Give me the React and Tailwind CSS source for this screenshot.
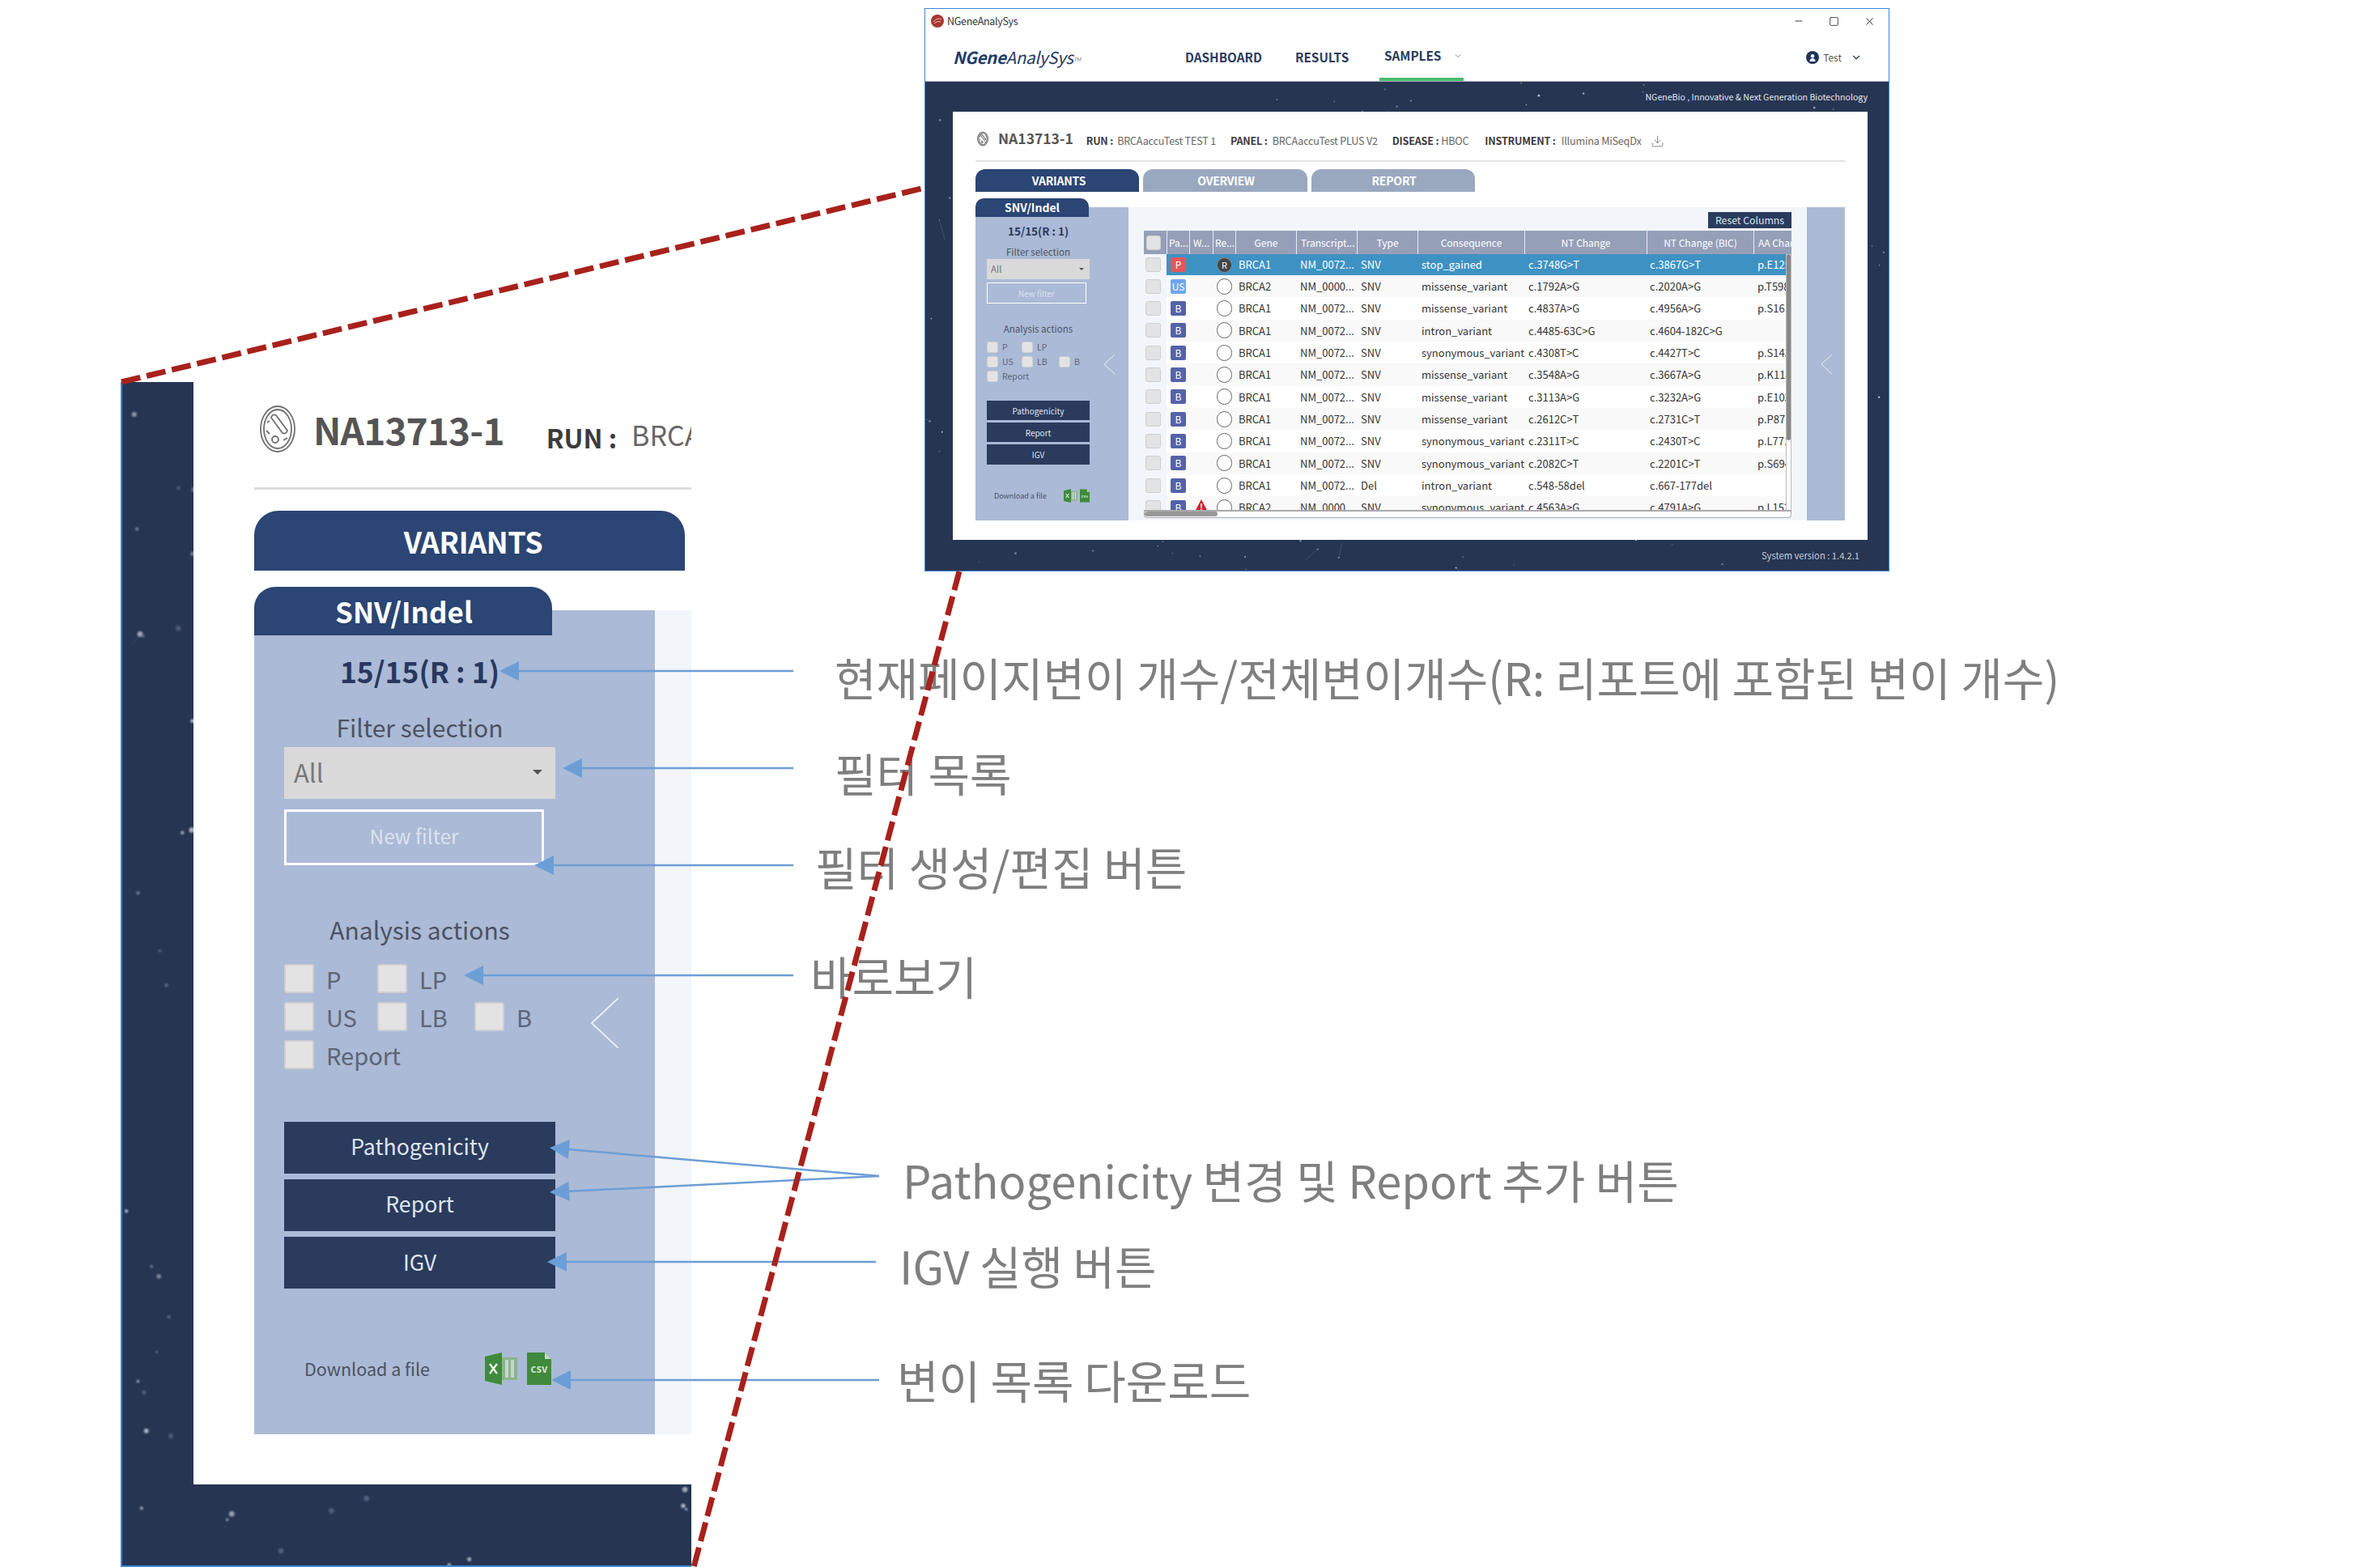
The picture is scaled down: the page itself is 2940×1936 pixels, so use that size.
import React from 'react';
import { ChevronDown, Download, Minus, Square, X } from 'lucide-react';

const rows = [
  { p: 'P', gene: 'BRCA1', nm: 'NM_0072...', type: 'SNV', cons: 'stop_gained', nt: 'c.3748G>T', bic: 'c.3867G>T', aa: 'p.E125', selected: true },
  { p: 'US', gene: 'BRCA2', nm: 'NM_0000...', type: 'SNV', cons: 'missense_variant', nt: 'c.1792A>G', bic: 'c.2020A>G', aa: 'p.T598' },
  { p: 'B', gene: 'BRCA1', nm: 'NM_0072...', type: 'SNV', cons: 'missense_variant', nt: 'c.4837A>G', bic: 'c.4956A>G', aa: 'p.S161' },
  { p: 'B', gene: 'BRCA1', nm: 'NM_0072...', type: 'SNV', cons: 'intron_variant', nt: 'c.4485-63C>G', bic: 'c.4604-182C>G', aa: '' },
  { p: 'B', gene: 'BRCA1', nm: 'NM_0072...', type: 'SNV', cons: 'synonymous_variant', nt: 'c.4308T>C', bic: 'c.4427T>C', aa: 'p.S143' },
  { p: 'B', gene: 'BRCA1', nm: 'NM_0072...', type: 'SNV', cons: 'missense_variant', nt: 'c.3548A>G', bic: 'c.3667A>G', aa: 'p.K118' },
  { p: 'B', gene: 'BRCA1', nm: 'NM_0072...', type: 'SNV', cons: 'missense_variant', nt: 'c.3113A>G', bic: 'c.3232A>G', aa: 'p.E103' },
  { p: 'B', gene: 'BRCA1', nm: 'NM_0072...', type: 'SNV', cons: 'missense_variant', nt: 'c.2612C>T', bic: 'c.2731C>T', aa: 'p.P871' },
  { p: 'B', gene: 'BRCA1', nm: 'NM_0072...', type: 'SNV', cons: 'synonymous_variant', nt: 'c.2311T>C', bic: 'c.2430T>C', aa: 'p.L771' },
  { p: 'B', gene: 'BRCA1', nm: 'NM_0072...', type: 'SNV', cons: 'synonymous_variant', nt: 'c.2082C>T', bic: 'c.2201C>T', aa: 'p.S694' },
  { p: 'B', gene: 'BRCA1', nm: 'NM_0072...', type: 'Del', cons: 'intron_variant', nt: 'c.548-58del', bic: 'c.667-177del', aa: '' },
  { p: 'B', gene: 'BRCA2', nm: 'NM_0000...', type: 'SNV', cons: 'synonymous_variant', nt: 'c.4563A>G', bic: 'c.4791A>G', aa: 'p.L152', warn: true },
];

const headers = [
  { label: 'Pa...', cls: 'pl-[2px]' },
  { label: 'W...', cls: 'pl-[4px]' },
  { label: 'Re...', cls: 'pl-[2px]' },
  { label: 'Gene', cls: 'justify-center' },
  { label: 'Transcript...', cls: 'pl-[5px]' },
  { label: 'Type', cls: 'justify-center' },
  { label: 'Consequence', cls: 'justify-center' },
  { label: 'NT Change', cls: 'justify-center' },
  { label: 'NT Change (BIC)', cls: 'justify-center' },
  { label: 'AA Change', cls: 'pl-[5px]' },
];

const badgeColors = {
  P: 'bg-[#e2575f]',
  US: 'bg-[#6fa6ea]',
  B: 'bg-[#5562a8]',
};

// repeatable dots for the night sky background
function makeStars(count, seed, w, h) {
  let s = seed;
  const next = () => {
    s = (s * 16807) % 2147483647;
    return s / 2147483647;
  };
  return Array.from({ length: count }, () => ({
    x: next() * w,
    y: next() * h,
    o: 0.2 + next() * 0.6,
    k: 0.6 + next() * 0.8,
    dx: (next() - 0.5) * 60,
    dy: (next() - 0.5) * 60,
  }));
}

const Stars = ({ w, h, count, seed, r, className = '' }) => (
  <svg className={`absolute inset-0 ${className}`} width={w} height={h}>
    {makeStars(count, seed, w, h).map((d, i) => (
      <g key={i}>
        <circle cx={d.x} cy={d.y} r={r * d.k} fill="#dfe6f2" opacity={d.o} />
        {i % 9 === 0 && (
          <line x1={d.x} y1={d.y} x2={d.x + d.dx} y2={d.y + d.dy} stroke="#dfe6f2" strokeWidth="1" opacity="0.15" />
        )}
      </g>
    ))}
  </svg>
);

const DishIcon = ({ className, sw }) => (
  <svg className={className} viewBox="0 0 46 60" fill="none" stroke="#707070" strokeWidth={sw}>
    <ellipse cx="23" cy="30" rx="21" ry="28" />
    <ellipse cx="23" cy="30" rx="17" ry="24" />
    <path d="M15 16 L29 35 Q33 37 35 32 L21 13 Q16 11 15 16 Z" />
    <circle cx="20" cy="43" r="4" />
    <path d="M9 32 L13 36 M30 44 L35 41 M10 22 L13 20" />
  </svg>
);

const ExcelIcon = ({ className }) => (
  <svg className={className} viewBox="0 0 40 40">
    <path d="M0 5 L21 0 V40 L0 35 Z" fill="#3f8a3c" />
    <path d="M21 6 H40 V34 H21 Z" fill="#8db48c" />
    <path d="M25 9 H29 V31 H25 Z M32 9 H36 V31 H32 Z" fill="#c5d6cf" />
    <path d="M6 14 L15 26 M15 14 L6 26" stroke="#e9f2e8" strokeWidth="2.4" />
  </svg>
);

const CsvIcon = ({ className }) => (
  <svg className={className} viewBox="0 0 30 40">
    <path d="M0 0 H22 L30 8 V40 H0 Z" fill="#3f8a3c" />
    <path d="M22 0 L30 8 H22 Z" fill="#c6dcc5" />
    <text x="15" y="25" textAnchor="middle" fontSize="13" fill="#cfe3cc" fontWeight="700">csv</text>
  </svg>
);

const Box = ({ className }) => (
  <div className={`shrink-0 rounded-[3px] border border-[#cfcfd2] bg-[#e3e3e3] ${className}`} />
);

const Cell = ({ row, className, children }) => (
  <div className={`flex h-full items-center overflow-hidden whitespace-nowrap text-[13px] ${row.selected ? 'bg-[#3e92c3] text-white' : 'text-[#333]'} ${className}`}>
    {children}
  </div>
);

const Row = ({ row }) => (
  <div className={`grid grid-cols-[28px_28px_29px_28px_75px_75px_75px_132px_151px_132px_47px] items-center ${row.selected ? 'h-[26px]' : 'h-[27.33px]'}`}>
    <div className="flex h-full items-center bg-[#f2f5fa] pl-[2px]">
      <Box className="h-[18px] w-[19px]" />
    </div>
    <Cell row={row} className="pl-[5px]">
      <span className={`flex h-[18px] w-[19px] items-center justify-center rounded-[2px] text-[12px] text-white ${badgeColors[row.p]}`}>{row.p}</span>
    </Cell>
    <Cell row={row} className="relative">
      {row.warn && (
        <svg className="absolute left-[7px] top-[4px] h-[15px] w-[16px]" viewBox="0 0 16 15">
          <path d="M8 0 L16 15 H0 Z" fill="#d0212f" />
          <path d="M7.2 5 H8.8 V10.5 H7.2 Z M7.2 11.6 H8.8 V13 H7.2 Z" fill="#fff" />
        </svg>
      )}
    </Cell>
    <Cell row={row} className="pl-[5px]">
      {row.selected ? (
        <span className="flex h-[19px] w-[19px] items-center justify-center rounded-full border border-[#888] bg-[#444] text-[11px] text-white">R</span>
      ) : (
        <span className="h-[20px] w-[19px] rounded-full border border-[#666] bg-white" />
      )}
    </Cell>
    <Cell row={row} className="pl-[4px]">{row.gene}</Cell>
    <Cell row={row} className="pl-[5px]">{row.nm}</Cell>
    <Cell row={row} className="pl-[5px]">{row.type}</Cell>
    <Cell row={row} className="pl-[5px]">{row.cons}</Cell>
    <Cell row={row} className="pl-[5px]">{row.nt}</Cell>
    <Cell row={row} className="pl-[4px]">{row.bic}</Cell>
    <Cell row={row} className="pl-[5px]">{row.aa}</Cell>
  </div>
);

const MiniCheck = ({ label }) => (
  <div className="flex h-[14px] items-center gap-[5px]">
    <Box className="h-[14px] w-[14px]" />
    <span className="text-[10.5px] leading-none text-[#5d6577]">{label}</span>
  </div>
);

const AppWindow = () => (
  <div className="absolute left-[1142px] top-[10px] flex h-[696px] w-[1192px] flex-col border border-[#3a87d8] bg-white">
    {/* title bar */}
    <div className="flex h-[30px] items-center justify-between pl-[7px] pr-[16px]">
      <div className="flex items-center gap-[4px]">
        <svg className="h-[16px] w-[16px]" viewBox="0 0 16 16">
          <circle cx="8" cy="8" r="8" fill="#a8352c" />
          <path d="M3 9 Q8 3 13 6 M4 11 Q8 7 12 9" stroke="#e8c7c2" strokeWidth="1" fill="none" />
        </svg>
        <span className="text-[12.5px] tracking-[-0.3px] text-[#333]">NGeneAnalySys</span>
      </div>
      <div className="flex items-center gap-[30px] text-[#222]">
        <Minus size={14} strokeWidth={1.5} />
        <Square size={13} strokeWidth={1.5} />
        <X size={15} strokeWidth={1.5} />
      </div>
    </div>

    {/* nav */}
    <div className="flex h-[59px] items-center pl-[34px] pr-[33px]">
      <span className="w-[287px] text-[20.5px] italic tracking-[-0.3px] text-[#1f3a66]">
        <b>NGene</b>AnalySys<sup className="text-[7px] text-[#888]">TM</sup>
      </span>
      <div className="flex h-full items-center text-[15.3px] font-bold text-[#2a3b5d]">
        <span className="w-[136px]">DASHBOARD</span>
        <span className="w-[104px]">RESULTS</span>
        <div className="flex h-full w-[104px] items-center gap-[15px] border-b-[4px] border-[#4cbc6e] pl-[6px]">
          <span>SAMPLES</span>
          <ChevronDown size={12} className="text-[#888]" />
        </div>
      </div>
      <div className="ml-auto flex items-center">
        <span className="flex h-[16px] w-[16px] items-center justify-center rounded-full bg-[#1f3358]">
          <svg className="h-[10px] w-[10px]" viewBox="0 0 10 10">
            <circle cx="5" cy="3.2" r="2.2" fill="#fff" />
            <path d="M1.5 10 Q1.5 6 5 6 Q8.5 6 8.5 10 Z" fill="#fff" />
          </svg>
        </span>
        <span className="ml-[5px] text-[12px] text-[#555]">Test</span>
        <ChevronDown size={14} className="ml-[11px] text-[#2a3b5d]" />
      </div>
    </div>

    {/* body */}
    <div className="relative flex-1 overflow-hidden border-t border-[#aab0bc] bg-[#263552]">
      <Stars w={1192} h={606} count={320} seed={4711} r={1} />
      <div className="relative flex h-[37px] items-center justify-end pr-[26px] text-[10.6px] text-[#e4e8f0]">
        NGeneBio , Innovative &amp; Next Generation Biotechnology
      </div>
      <div className="relative ml-[34px] mr-[26px] h-[529px] bg-white px-[28px]">
        {/* sample header */}
        <div className="flex h-[62px] items-center border-b-2 border-[#e2e2e2] pl-[2px] pt-[6px]">
          <DishIcon className="h-[23px] w-[14px]" sw="3.5" />
          <span className="ml-[12px] text-[17.5px] font-bold leading-none text-[#555]">NA13713-1</span>
          <div className="ml-[16px] flex items-center pt-[6px] text-[12.6px] leading-none tracking-[-0.2px] text-[#666]">
            <b className="mr-[5px] text-[#3b3b3b]">RUN :</b>
            <span className="mr-[18px]">BRCAaccuTest TEST 1</span>
            <b className="mr-[6px] text-[#3b3b3b]">PANEL :</b>
            <span className="mr-[18px]">BRCAaccuTest PLUS V2</span>
            <b className="mr-[3px] text-[#3b3b3b]">DISEASE :</b>
            <span className="mr-[20px]">HBOC</span>
            <b className="mr-[7px] text-[#3b3b3b]">INSTRUMENT :</b>
            <span>Illumina MiSeqDx</span>
            <Download size={17} strokeWidth={1} className="ml-[12px] text-[#555]" />
          </div>
        </div>

        {/* tabs */}
        <div className="mt-[9px] flex gap-[5px] text-[14px] font-bold tracking-[-0.2px] text-white">
          <div className="flex h-[28px] w-[202px] items-center justify-center rounded-t-[12px] bg-[#2b4574] pl-[4px]">VARIANTS</div>
          <div className="flex h-[28px] w-[203px] items-center justify-center rounded-t-[12px] bg-[#9aa8bf] pl-[2px]">OVERVIEW</div>
          <div className="flex h-[28px] w-[202px] items-center justify-center rounded-t-[12px] bg-[#9aa8bf] pl-[2px]">REPORT</div>
        </div>

        <div className="mt-[19px] flex h-[387px]">
          {/* filter panel */}
          <div className="relative flex w-[189px] flex-col items-start bg-[#abbad6] pl-[14px] pt-[19px]">
            <div className="absolute -top-[11px] left-0 flex h-[23px] w-[140px] items-center justify-center rounded-t-[10px] bg-[#2b4574] text-[14px] font-bold text-white">SNV/Indel</div>
            <div className="w-[127px] text-center text-[13.5px] font-bold leading-[20px] text-[#28385e]">15/15(R : 1)</div>
            <div className="mt-[7px] w-[127px] text-center text-[11.5px] leading-[18px] text-[#4c5263]">Filter selection</div>
            <div className="flex h-[25px] w-[127px] items-center justify-between bg-[#d9d9d9] pl-[5px] pr-[7px] text-[11.5px] text-[#777]">
              All
              <span className="h-0 w-0 border-x-[3px] border-t-[3px] border-x-transparent border-t-[#555]" />
            </div>
            <div className="mt-[4px] flex h-[26px] w-[123px] items-center justify-center border border-white text-[10px] text-[#dbe2ef]">New filter</div>
            <div className="mt-[22px] w-[127px] text-center text-[11.5px] leading-[18px] text-[#4c5263]">Analysis actions</div>
            <div className="mt-[7px] grid grid-cols-[43px_46px_auto] gap-y-[4px]">
              <MiniCheck label="P" />
              <MiniCheck label="LP" />
              <span />
              <MiniCheck label="US" />
              <MiniCheck label="LB" />
              <MiniCheck label="B" />
              <MiniCheck label="Report" />
            </div>
            <svg className="absolute left-[158px] top-[182px] h-[24px] w-[14px]" viewBox="0 0 14 24" fill="none" stroke="#e8edf6" strokeWidth="1">
              <path d="M14 0 L1 12 L14 24" />
            </svg>
            <div className="mt-[23px] flex w-[127px] flex-col gap-[3px] text-[10px] text-[#dfe5f0]">
              <div className="flex h-[24px] items-center justify-center bg-[#2a3b5d]">Pathogenicity</div>
              <div className="flex h-[24px] items-center justify-center bg-[#2a3b5d]">Report</div>
              <div className="flex h-[25px] items-center justify-center bg-[#2a3b5d]">IGV</div>
            </div>
            <div className="mt-[30px] flex w-[127px] items-center pl-[9px]">
              <span className="text-[9px] text-[#4c5263]">Download a file</span>
              <ExcelIcon className="ml-auto h-[17px] w-[17px]" />
              <CsvIcon className="ml-[3px] h-[17px] w-[12px]" />
            </div>
          </div>

          {/* table */}
          <div className="flex flex-1 flex-col items-end bg-[#f2f5fa] pl-[18px] pr-[19px] pt-[6px]">
            <div className="flex h-[20px] w-[103px] items-center justify-center bg-[#2a3b5d] text-[12.3px] text-[#dfe5f0]">Reset Columns</div>
            <div className="relative mt-[3px] w-[800px] overflow-hidden">
              <div className="grid h-[29px] grid-cols-[28px_28px_29px_28px_75px_75px_75px_132px_151px_132px_47px] text-[12px] text-white">
                <div className="flex items-center bg-[#959fb8] pl-[3px]">
                  <Box className="h-[18px] w-[18px]" />
                </div>
                {headers.map((h) => (
                  <div key={h.label} className={`flex items-center overflow-hidden whitespace-nowrap border-l border-[#e6e9f0] bg-[#959fb8] ${h.cls}`}>{h.label}</div>
                ))}
              </div>
              <div className="h-[316px] overflow-hidden bg-white">
                {rows.map((row, i) => (
                  <div key={i} className={i % 2 === 1 ? 'bg-[#f9f9f9]' : 'bg-white'}>
                    <Row row={row} />
                  </div>
                ))}
              </div>
              <div className="h-[10px] rounded-b-[4px] border border-t-2 border-[#aaa] bg-white">
                <div className="h-[6px] w-[90px] rounded-[3px] bg-[#999]" />
              </div>
              <div className="absolute right-0 top-[29px] h-[316px] w-[7px] border-x border-[#bbb] bg-white">
                <div className="h-[230px] rounded-[3px] bg-[#888]" />
              </div>
            </div>
          </div>

          {/* collapsed right panel */}
          <div className="flex w-[47px] items-start justify-center bg-[#abbad6] pt-[182px]">
            <svg className="h-[24px] w-[14px]" viewBox="0 0 14 24" fill="none" stroke="#e8edf6" strokeWidth="1">
              <path d="M14 0 L1 12 L14 24" />
            </svg>
          </div>
        </div>
      </div>
      <div className="relative flex h-[38px] items-center justify-end pr-[36px] text-[11.2px] text-[#c6ccd8]">
        System version : 1.4.2.1
      </div>
    </div>
  </div>
);

const BigCheck = ({ label }) => (
  <div className="flex items-center gap-[15px]">
    <Box className="h-[36px] w-[37px] !border-2" />
    <span className="text-[29px] leading-none text-[#5d6577]">{label}</span>
  </div>
);

const ZoomedPanel = () => (
  <div className="absolute left-[149px] top-[472px] h-[1464px] w-[705px] overflow-hidden border-b-2 border-l-2 border-[#3a87d8] bg-[#263552]">
    <Stars w={705} h={1464} count={170} seed={90210} r={2.4} className="blur-[1px]" />
    <div className="relative ml-[88px] h-[1362px] bg-white pl-[75px]">
      {/* sample header */}
      <div className="flex h-[133px] items-center overflow-hidden whitespace-nowrap border-b-[3px] border-[#dcdcdc] pb-[14px] pl-[6px]">
        <DishIcon className="h-[60px] w-[46px] shrink-0" sw="1.8" />
        <span className="ml-[21px] text-[46px] font-bold leading-none tracking-[-0.9px] text-[#555]">NA13713-1</span>
        <b className="ml-[52px] mt-[20px] text-[32px] leading-none text-[#3b3b3b]">RUN :</b>
        <span className="ml-[18px] mt-[14px] text-[34px] leading-none text-[#666]">BRCAaccuTest</span>
      </div>

      <div className="mt-[26px] flex h-[74px] w-[532px] items-center justify-center rounded-t-[30px] bg-[#2b4574] pl-[9px] text-[36px] font-bold tracking-[-0.4px] text-white">VARIANTS</div>

      <div className="mt-[49px] flex h-[1018px]">
        <div className="relative flex w-[495px] flex-col items-start bg-[#abbad6] pl-[37px] pt-[50px]">
          <div className="absolute -top-[29px] left-0 flex h-[60px] w-[368px] items-center justify-center rounded-t-[26px] bg-[#2b4574] pl-[2px] text-[35px] font-bold text-white">SNV/Indel</div>
          <div className="h-[50px] w-[335px] text-center text-[35.5px] font-bold leading-[50px] text-[#28385e]">15/15(R : 1)</div>
          <div className="mt-[24px] h-[40px] w-[335px] text-center text-[30px] leading-[40px] text-[#4c5263]">Filter selection</div>
          <div className="mt-[5px] flex h-[64px] w-[335px] items-center justify-between bg-[#d9d9d9] pb-[2px] pl-[12px] pr-[16px] text-[31px] text-[#777]">
            All
            <span className="h-0 w-0 border-x-[6px] border-t-[6px] border-x-transparent border-t-[#555]" />
          </div>
          <div className="mt-[13px] flex h-[69px] w-[321px] items-center justify-center border-[3px] border-white pb-[2px] text-[24.5px] text-[#dbe2ef]">New filter</div>
          <div className="mt-[59px] h-[40px] w-[335px] text-center text-[30px] leading-[40px] text-[#4c5263]">Analysis actions</div>
          <div className="mt-[23px] grid grid-cols-[115px_120px_auto] gap-y-[11px]">
            <BigCheck label="P" />
            <BigCheck label="LP" />
            <span />
            <BigCheck label="US" />
            <BigCheck label="LB" />
            <BigCheck label="B" />
            <BigCheck label="Report" />
          </div>
          <svg className="absolute left-[416px] top-[479px] h-[62px] w-[34px]" viewBox="0 0 34 62" fill="none" stroke="#e8edf6" strokeWidth="2">
            <path d="M34 0 L1 31 L34 62" />
          </svg>
          <div className="mt-[65px] flex w-[335px] flex-col gap-[7px] text-[26.7px] text-[#dfe5f0]">
            <div className="flex h-[64px] items-center justify-center bg-[#2a3b5d] pb-[4px]">Pathogenicity</div>
            <div className="flex h-[64px] items-center justify-center bg-[#2a3b5d] pb-[4px]">Report</div>
            <div className="flex h-[64px] items-center justify-center bg-[#2a3b5d] pb-[2px]">IGV</div>
          </div>
          <div className="mt-[79px] flex w-[330px] items-center pl-[25px]">
            <span className="text-[21.5px] text-[#4c5263]">Download a file</span>
            <ExcelIcon className="ml-auto h-[40px] w-[40px]" />
            <CsvIcon className="ml-[12px] h-[40px] w-[30px]" />
          </div>
        </div>
        <div className="flex-1 bg-[#f2f5fa]" />
      </div>
    </div>
  </div>
);

const notes = [
  { text: '현재페이지변이 개수/전체변이개수(R: 리포트에 포함된 변이 개수)', cls: 'left-[1031px] top-[796px]' },
  { text: '필터 목록', cls: 'left-[1031px] top-[914px]' },
  { text: '필터 생성/편집 버튼', cls: 'left-[1007px] top-[1030px]' },
  { text: '바로보기', cls: 'left-[1001px] top-[1165px]' },
  { text: 'Pathogenicity 변경 및 Report 추가 버튼', cls: 'left-[1115px] top-[1417px]' },
  { text: 'IGV 실행 버튼', cls: 'left-[1111px] top-[1523px]' },
  { text: '변이 목록 다운로드', cls: 'left-[1108px] top-[1664px]' },
];

// tip x, tip y, tail x, tail y
const arrows = [
  [617, 829, 980, 829],
  [695, 949, 980, 949],
  [660, 1069, 980, 1069],
  [573, 1205, 980, 1205],
  [679, 1418, 1086, 1453],
  [679, 1473, 1086, 1453],
  [676, 1559, 1082, 1559],
  [681, 1705, 1086, 1705],
];

const Arrow = ({ a }) => {
  const [x1, y1, x2, y2] = a;
  const angle = (Math.atan2(y2 - y1, x2 - x1) * 180) / Math.PI;
  return (
    <g>
      <line x1={x1 + 20} y1={y1 + ((y2 - y1) * 20) / (x2 - x1)} x2={x2} y2={y2} stroke="#6c9ed6" strokeWidth="2.5" />
      <path d="M0 0 L24 -12 L24 12 Z" fill="#6c9ed6" transform={`translate(${x1} ${y1}) rotate(${angle})`} />
    </g>
  );
};

export default function App() {
  return (
    <div className="relative h-[1936px] w-[2940px] overflow-hidden bg-white font-['Noto_Sans_CJK_KR','Noto_Sans',sans-serif]">
      <AppWindow />
      <ZoomedPanel />

      {notes.map((n) => (
        <div key={n.text} className={`absolute h-[80px] whitespace-nowrap text-[56px] leading-[80px] text-[#7f7f7f] ${n.cls}`}>{n.text}</div>
      ))}

      {/* callout arrows and zoom guide lines */}
      <svg className="pointer-events-none absolute inset-0" width="2940" height="1936">
        {arrows.map((a, i) => (
          <Arrow key={i} a={a} />
        ))}
        <line x1="150" y1="472" x2="1142" y2="232" stroke="#a8211c" strokeWidth="7" strokeDasharray="24 8" />
        <line x1="1185" y1="706" x2="857" y2="1936" stroke="#a8211c" strokeWidth="7" strokeDasharray="24 8" />
      </svg>
    </div>
  );
}
